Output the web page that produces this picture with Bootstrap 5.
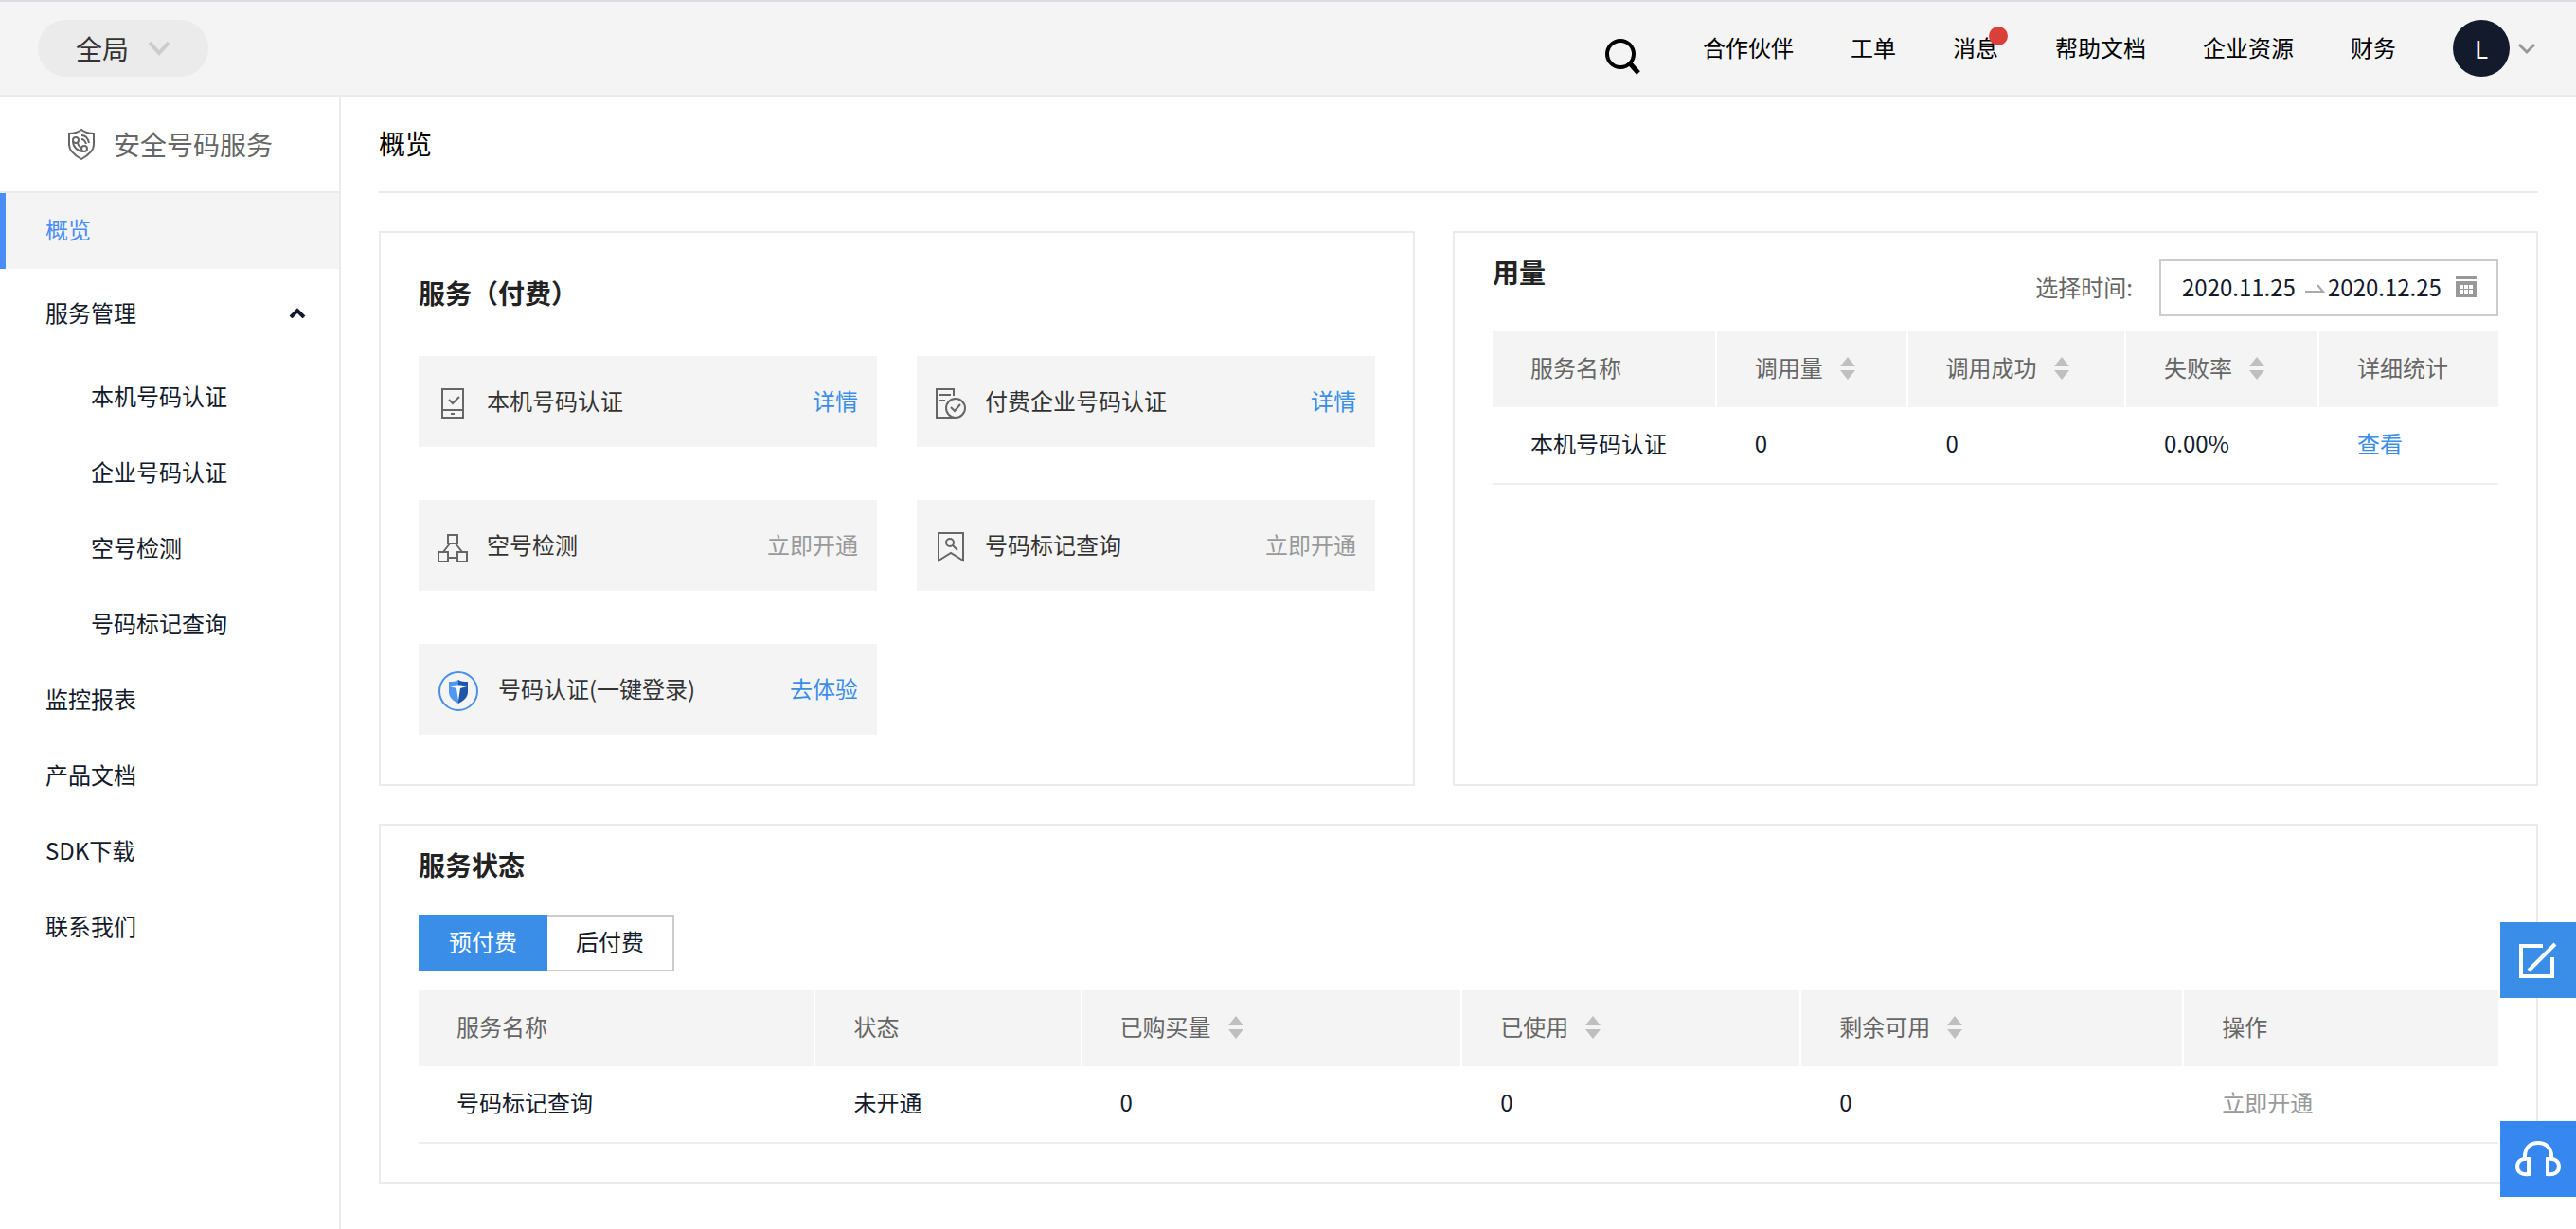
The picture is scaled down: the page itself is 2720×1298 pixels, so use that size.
<!DOCTYPE html>
<html lang="zh-CN">
<head>
<meta charset="utf-8">
<meta name="viewport" content="width=device-width, initial-scale=1">
<title>概览 - 安全号码服务</title>
<link href="https://cdn.jsdelivr.net/npm/bootstrap@5.3.0/dist/css/bootstrap.min.css" rel="stylesheet">
<style>
  :root { --line: #ebebeb; --soft: #f4f4f4; --ink: #131a2b; --brand: #3a8ee8; }
  body { font-family: "Noto Sans CJK SC", sans-serif; font-size: 24px; line-height: 36px; color: var(--ink); background: #fff; }
  a { text-decoration: none; color: inherit; }
  svg { display: block; flex: none; }
  .topbar { background: var(--soft); border-top: 2px solid #dcdce0; border-bottom: 2px solid #e8eaef; height: 102px; padding: 0 42px 0 40px; }
  .region-btn { width: 180px; height: 60px; border: 0; border-radius: 30px; background: #ebebeb; color: #333; font-size: 28px; padding: 0 40px; }
  .topnav { gap: 60px; color: #000; }
  .topnav a { padding-bottom: 2px; }
  .new-dot { top: -4px; left: 38px; width: 20px; height: 20px; background: #d9403a; }
  .avatar-btn { width: 60px; height: 60px; background: var(--ink); color: #fff; border: 0; font-size: 26px; }
  .shell { min-height: calc(100vh - 102px); }
  .side { width: 360px; flex: none; border-right: 2px solid var(--line); }
  .side-head { height: 102px; border-bottom: 2px solid var(--line); padding-left: 70px; gap: 18px; font-size: 28px; color: #666; }
  .side-link { display: flex; align-items: center; height: 80px; padding: 0 34px 4px 48px; }
  .side-link.current { background: var(--soft); color: #4a8df8; border-left: 6px solid #4a8df8; padding-left: 42px; }
  .side-group { margin: 8px 0; }
  .side-sub .side-link { padding-left: 96px; }
  .main-area { padding: 0 40px 40px; min-width: 0; }
  .page-title { height: 102px; border-bottom: 2px solid var(--line); font-size: 28px; font-weight: 400; color: #000; }
  .panel-row { gap: 40px; margin: 40px 0; }
  .panel { border: 2px solid var(--line); padding: 0 40px; }
  .panel-title { font-size: 28px; line-height: 42px; font-weight: 600; color: #222; margin: 0; }
  .panel-pay { width: 1094px; max-width: 48%; padding-top: 42px; padding-bottom: 52px; }
  .panel-state { padding-top: 20px; padding-bottom: 40px; }
  .usage-head { padding: 20px 0 16px; }
  .tiles { display: grid; grid-template-columns: 1fr 1fr; gap: 56px 42px; margin-top: 46px; }
  .tile { height: 96px; background: var(--soft); padding: 0 20px 2px; gap: 20px; color: #333; }
  .link-go { color: #3a8ee8; }
  .link-off { color: #999; }
  .grid-table { width: 100%; table-layout: fixed; border-collapse: separate; border-spacing: 0; }
  .grid-table th { height: 80px; padding: 0 0 4px 40px; background: var(--soft); color: #666; font-weight: 400; border-right: 2px solid #fff; }
  .grid-table th:last-child { border-right: 0; }
  .grid-table td { height: 82px; padding: 0 0 4px 40px; border-bottom: 2px solid #efefef; }
  .sort-btn { border: 0; background: none; padding: 2px 0 0; margin-left: 18px; }
  .date-label { color: #666; margin-right: 28px; padding-bottom: 2px; }
  .date-range { border: 2px solid #ccc; height: 60px; padding: 0 21px 0 22px; }
  .date-range input { width: 124px; border: 0; padding: 0 0 2px; outline: 0; background: none; color: var(--ink); font: inherit; }
  .pay-tab { height: 60px; border: 2px solid #ccc; border-left: 0; background: #fff; color: var(--ink); padding: 0 30px 4px; }
  .pay-tab.current { border: 2px solid var(--brand); background: var(--brand); color: #fff; }
  .pay-tabs { margin: 32px 0 20px; }
  .float-tools { position: fixed; right: 0; bottom: 34px; gap: 130px; }
  .float-tools button { width: 80px; height: 80px; border: 0; padding: 0; display: flex; align-items: center; justify-content: center; background: var(--brand); }
  .float-tools button + button { background: #3687f0; }
</style>
<script src="https://cdn.jsdelivr.net/npm/bootstrap@5.3.0/dist/js/bootstrap.bundle.min.js"></script>
</head>
<body>
<svg width="0" height="0" class="position-absolute" aria-hidden="true">
  <symbol id="sorter" viewBox="0 0 16 24"><path d="M8 0l8 10H0zM0 14h16L8 24z" fill="#bfbfbf"/></symbol>
</svg>

<header class="topbar d-flex align-items-center justify-content-between">
  <button class="region-btn d-flex align-items-center justify-content-between" type="button">全局
    <svg width="24" height="16" viewBox="0 0 24 16" fill="none" stroke="#ccc" stroke-width="4"><path d="M2 2l10 11L22 2"/></svg>
  </button>
  <nav class="topnav d-flex align-items-center" aria-label="主导航">
    <button class="border-0 bg-transparent p-0" type="button" aria-label="搜索">
      <svg width="44" height="56" viewBox="0 0 44 56" fill="none" stroke="#000" stroke-width="4"><circle cx="17" cy="34" r="14"/><path d="M27 44l9 10" stroke-width="5"/></svg>
    </button>
    <a href="#">合作伙伴</a>
    <a href="#">工单</a>
    <a href="#" class="position-relative">消息<span class="new-dot position-absolute rounded-circle"></span></a>
    <a href="#">帮助文档</a>
    <a href="#">企业资源</a>
    <a href="#">财务</a>
    <div class="d-flex align-items-center gap-2">
      <button class="avatar-btn rounded-circle p-0" type="button">L</button>
      <svg width="20" height="14" viewBox="0 0 20 14" fill="none" stroke="#999" stroke-width="3"><path d="M2 3l8 8 8-8"/></svg>
    </div>
  </nav>
</header>

<div class="shell d-flex">
  <aside class="side">
    <div class="side-head d-flex align-items-center">
      <svg width="32" height="34" viewBox="0 0 32 34" fill="none" stroke="#666" stroke-width="2"><path d="M16 2C12 5 7 6 3 6v12c0 6 6 11 13 15 7-4 13-9 13-15V6C25 6 20 5 16 2z"/><circle cx="10" cy="13" r="3"/><circle cx="19" cy="22" r="3"/><path d="M7 14c0 6 5 11 11 11M12 15c0 3 2 5 4 6M16 12c3 0 4 2 5 5M16 8c4 0 7 3 8 8"/></svg>
      <span>安全号码服务</span>
    </div>
    <nav aria-label="服务导航">
      <a href="#" class="side-link current">概览</a>
      <div class="side-group">
        <a href="#" class="side-link justify-content-between">服务管理
          <svg width="20" height="12" viewBox="0 0 20 12" fill="none" stroke="#131a2b" stroke-width="4"><path d="M3 11l7-7 7 7"/></svg>
        </a>
      </div>
      <div class="side-sub">
        <a href="#" class="side-link">本机号码认证</a>
        <a href="#" class="side-link">企业号码认证</a>
        <a href="#" class="side-link">空号检测</a>
        <a href="#" class="side-link">号码标记查询</a>
      </div>
      <a href="#" class="side-link">监控报表</a>
      <a href="#" class="side-link">产品文档</a>
      <a href="#" class="side-link">SDK下载</a>
      <a href="#" class="side-link">联系我们</a>
    </nav>
  </aside>

  <main class="main-area flex-grow-1">
    <h1 class="page-title d-flex align-items-center mb-0">概览</h1>

    <div class="panel-row d-flex">
      <section class="panel panel-pay flex-shrink-0">
        <h2 class="panel-title">服务（付费）</h2>
        <div class="tiles">
          <div class="tile d-flex align-items-center">
            <svg width="32" height="38" viewBox="0 0 32 38" fill="none" stroke="#666" stroke-width="2"><path d="M5 7h22v30H5zM5 29h22M14 33h4M12 18l4 4 7-7"/></svg>
            <span class="flex-grow-1">本机号码认证</span><a href="#" class="link-go">详情</a>
          </div>
          <div class="tile d-flex align-items-center">
            <svg width="32" height="38" viewBox="0 0 32 38" fill="none" stroke="#666" stroke-width="2"><path d="M19 14V7H1v30h20M4 13h12M4 19h6M16 26l4 4 6-7"/><circle cx="21" cy="27" r="10"/></svg>
            <span class="flex-grow-1">付费企业号码认证</span><a href="#" class="link-go">详情</a>
          </div>
          <div class="tile d-flex align-items-center">
            <svg width="32" height="38" viewBox="0 0 32 38" fill="none" stroke="#666" stroke-width="2"><path d="M11 9h10v9H11zM1 27h10v10H1zM21 27h10v10H21zM11 33h10M13 18l-7 9M19 18l7 9"/></svg>
            <span class="flex-grow-1">空号检测</span><a href="#" class="link-off">立即开通</a>
          </div>
          <div class="tile d-flex align-items-center">
            <svg width="32" height="38" viewBox="0 0 32 38" fill="none" stroke="#666" stroke-width="2"><path d="M3 7h26v29l-13-8-13 8zM18 20l5 5"/><circle cx="15" cy="17" r="4"/></svg>
            <span class="flex-grow-1">号码标记查询</span><a href="#" class="link-off">立即开通</a>
          </div>
          <div class="tile d-flex align-items-center">
            <svg width="44" height="50" viewBox="0 0 44 50"><circle cx="22" cy="28" r="20" fill="none" stroke="#4a8fe8" stroke-width="2"/><path d="M22 16c-3 2-6 2-10 2v11c0 5 4 9 10 12z" fill="#4f97f2"/><path d="M22 16c3 2 6 2 10 2v11c0 5-4 9-10 12z" fill="#2056a8"/><path d="M13 23c4-2 14-2 18 0l-7 2-2 13-2-13z" fill="#fff"/></svg>
            <span class="flex-grow-1">号码认证(一键登录)</span><a href="#" class="link-go">去体验</a>
          </div>
        </div>
      </section>

      <section class="panel flex-grow-1">
        <div class="usage-head d-flex justify-content-between">
          <h2 class="panel-title">用量</h2>
          <div class="d-flex align-items-center pt-2">
            <label class="date-label" for="from">选择时间:</label>
            <div class="date-range d-flex align-items-center">
              <input id="from" type="text" value="2020.11.25">
              <svg width="30" height="12" viewBox="0 0 30 12" fill="none" stroke="#aaa" stroke-width="2"><path d="M6 10h19l-6-7"/></svg>
              <input type="text" value="2020.12.25" aria-label="结束时间">
              <svg width="33" height="24" viewBox="-11 0 33 24"><path d="M0 0h22v3H0zM0 5h22v17H0z" fill="#999"/><path d="M4 9h14v9H4z" fill="#fff"/><path d="M4 13h14v1H4zM8 9h1v9H8zM13 9h1v9h-1z" fill="#999"/></svg>
            </div>
          </div>
        </div>
        <table class="grid-table">
          <colgroup><col style="width:22.3%"><col style="width:19%"><col style="width:21.7%"><col style="width:19.2%"><col></colgroup>
          <thead><tr>
            <th scope="col">服务名称</th>
            <th scope="col"><div class="d-flex align-items-center">调用量<button class="sort-btn" type="button" aria-label="排序"><svg width="16" height="24"><use href="#sorter"/></svg></button></div></th>
            <th scope="col"><div class="d-flex align-items-center">调用成功<button class="sort-btn" type="button" aria-label="排序"><svg width="16" height="24"><use href="#sorter"/></svg></button></div></th>
            <th scope="col"><div class="d-flex align-items-center">失败率<button class="sort-btn" type="button" aria-label="排序"><svg width="16" height="24"><use href="#sorter"/></svg></button></div></th>
            <th scope="col">详细统计</th>
          </tr></thead>
          <tbody><tr><td>本机号码认证</td><td>0</td><td>0</td><td>0.00%</td><td><a href="#" class="link-go">查看</a></td></tr></tbody>
        </table>
      </section>
    </div>

    <section class="panel panel-state">
      <h2 class="panel-title">服务状态</h2>
      <div class="pay-tabs d-flex">
        <button class="pay-tab current" type="button">预付费</button>
        <button class="pay-tab" type="button">后付费</button>
      </div>
      <table class="grid-table">
        <colgroup><col style="width:19.1%"><col style="width:12.8%"><col style="width:18.3%"><col style="width:16.3%"><col style="width:18.4%"><col></colgroup>
        <thead><tr>
          <th scope="col">服务名称</th>
          <th scope="col">状态</th>
          <th scope="col"><div class="d-flex align-items-center">已购买量<button class="sort-btn" type="button" aria-label="排序"><svg width="16" height="24"><use href="#sorter"/></svg></button></div></th>
          <th scope="col"><div class="d-flex align-items-center">已使用<button class="sort-btn" type="button" aria-label="排序"><svg width="16" height="24"><use href="#sorter"/></svg></button></div></th>
          <th scope="col"><div class="d-flex align-items-center">剩余可用<button class="sort-btn" type="button" aria-label="排序"><svg width="16" height="24"><use href="#sorter"/></svg></button></div></th>
          <th scope="col">操作</th>
        </tr></thead>
        <tbody><tr><td>号码标记查询</td><td>未开通</td><td>0</td><td>0</td><td>0</td><td><a href="#" class="link-off">立即开通</a></td></tr></tbody>
      </table>
    </section>
  </main>
</div>

<div class="float-tools d-flex flex-column">
  <button type="button" aria-label="反馈"><svg width="40" height="40" viewBox="0 0 40 40" fill="none" stroke="#fff" stroke-width="4"><path d="M25 5H2v32h33V17M10 31L38 3"/></svg></button>
  <button type="button" aria-label="客服"><svg width="48" height="40" viewBox="0 0 48 40" fill="none" stroke="#fff" stroke-width="4"><path d="M10 20v-3C10 8 16 3 24 3s14 5 14 14v3M14 20v16c-7 1-12-2-12-8s5-9 12-8zM34 20v16c7 1 12-2 12-8s-5-9-12-8z"/></svg></button>
</div>
</body>
</html>
